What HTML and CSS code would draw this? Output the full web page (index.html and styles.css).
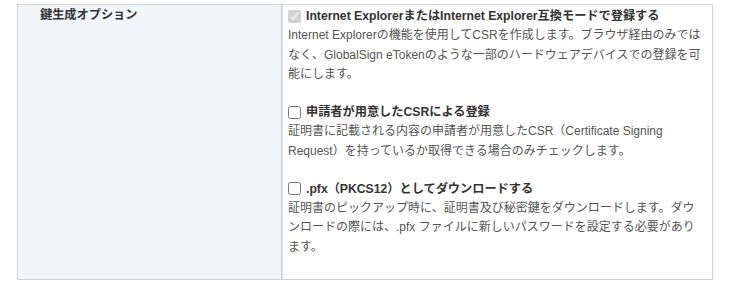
FILE: index.html
```html
<!DOCTYPE html>
<html lang="ja">
<head>
<meta charset="utf-8">
<link rel="stylesheet" href="styles.css">
</head>
<body>
<div class="table">
  <div class="label-cell">鍵生成オプション</div>
  <div class="value-cell">
    <div class="option">
      <label class="option-title"><input type="checkbox" checked disabled>Internet ExplorerまたはInternet Explorer互換モードで登録する</label>
      <p class="option-desc">Internet Explorerの機能を使用してCSRを作成します。ブラウザ経由のみではなく、GlobalSign eTokenのような一部のハードウェアデバイスでの登録を可能にします。</p>
    </div>
    <div class="option">
      <label class="option-title"><input type="checkbox">申請者が用意したCSRによる登録</label>
      <p class="option-desc">証明書に記載される内容の申請者が用意したCSR（Certificate Signing Request）を持っているか取得できる場合のみチェックします。</p>
    </div>
    <div class="option">
      <label class="option-title"><input type="checkbox">.pfx（PKCS12）としてダウンロードする</label>
      <p class="option-desc">証明書のピックアップ時に、証明書及び秘密鍵をダウンロードします。ダウンロードの際には、.pfx ファイルに新しいパスワードを設定する必要があります。</p>
    </div>
  </div>
</div>
</body>
</html>
```

FILE: styles.css
```css
html, body {
  margin: 0;
  padding: 0;
  background: #ffffff;
}

body {
  padding: 4px 27px 0 17px;
  font-family: "Liberation Sans", "Noto Sans CJK JP", sans-serif;
  color: #333333;
}

.table {
  display: grid;
  grid-template-columns: 264px 1fr;
  width: 696px;
  box-sizing: border-box;
  border: 1px solid #d3d3d3;
}

.label-cell {
  background: #f3f6f9;
  border-right: 1px solid #cfcfcf;
  padding: 1px 0 0 22px;
  font-size: 12.2px;
  line-height: 19px;
  font-weight: bold;
  color: #333333;
}

.value-cell {
  border-left: 1px solid #e2e2e2;
  padding: 1px 6px 4px 5px;
}

.option {
  margin-bottom: 17.5px;
}

.option-title {
  display: flex;
  align-items: center;
  font-size: 12.2px;
  line-height: 20px;
  font-weight: bold;
  color: #333333;
}

.option-title input {
  width: 13px;
  height: 13px;
  margin: 0 5px 0 0;
  flex: none;
}

.option-desc {
  margin: 0;
  font-size: 12px;
  line-height: 19.5px;
  color: #555555;
}
```
